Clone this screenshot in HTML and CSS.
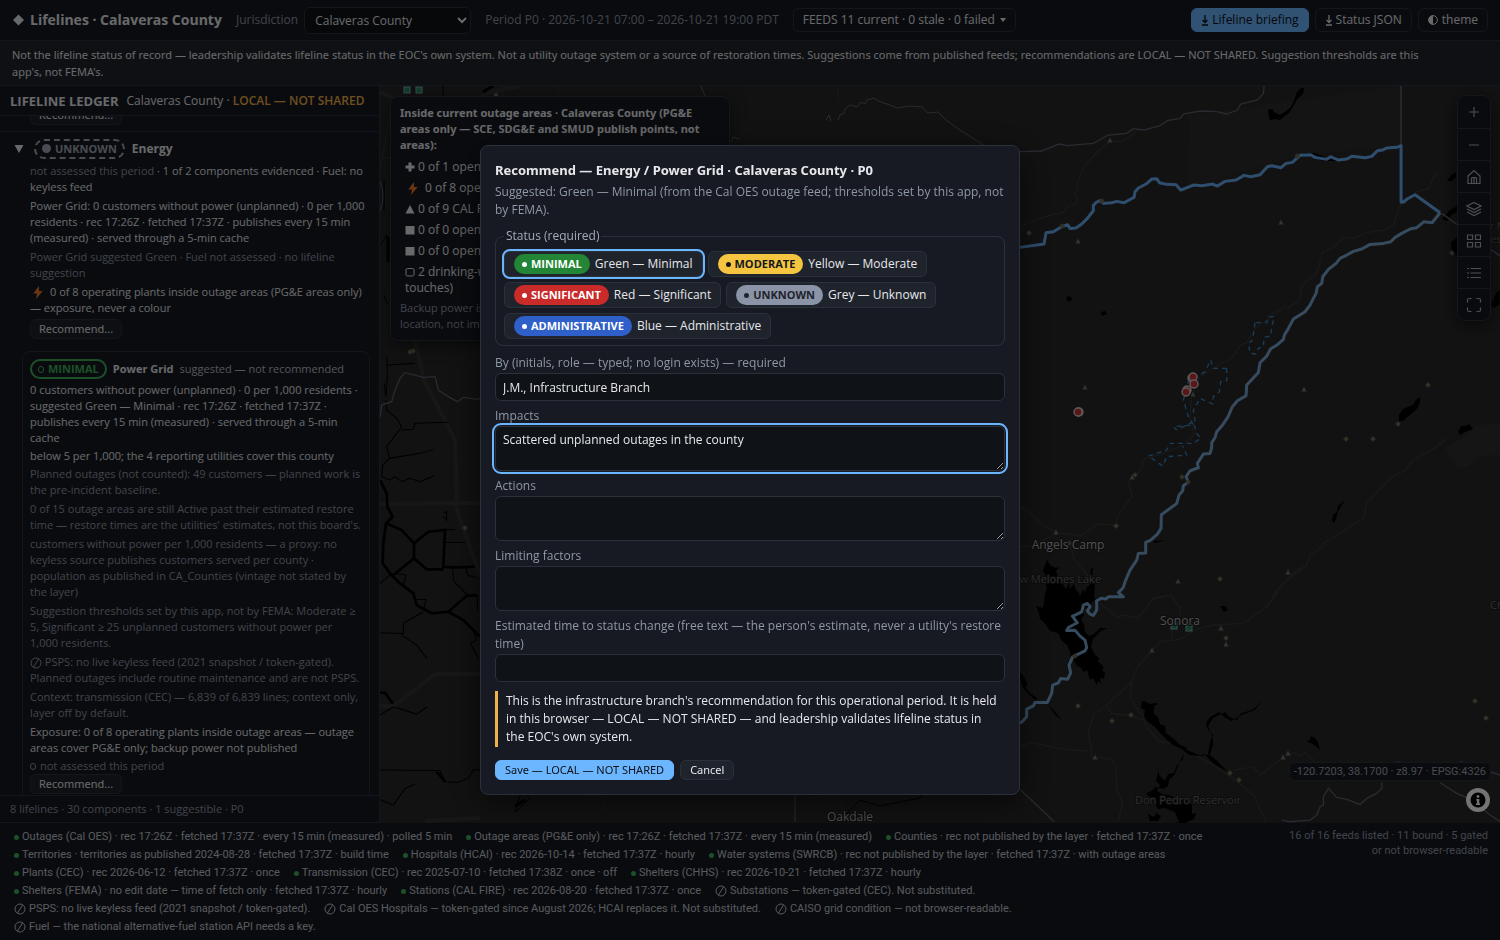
FILE: index.html
```html
<!DOCTYPE html>
<html lang="en">
<head>
<meta charset="utf-8">
<title>Lifelines · Calaveras County</title>
<link rel="stylesheet" href="styles.css">
</head>
<body>
<svg class="defs" aria-hidden="true">
  <symbol id="i-bolt" viewBox="0 0 12 14"><path d="M7 0 1 8h4l-1 6 7-8.500H7z" fill="#f0782e"/></symbol>
  <symbol id="i-none" viewBox="0 0 12 12"><circle cx="6" cy="6" r="5" fill="none" stroke="currentColor"/><path d="M3.500 10 8.500 2" stroke="currentColor"/></symbol>
  <symbol id="i-down" viewBox="0 0 8 12"><path d="M4 1v7M1.500 6 4 8.500 6.500 6M1 11h6" fill="none" stroke="currentColor" stroke-width="1.300"/></symbol>
  <symbol id="tri" viewBox="0 0 6 6" overflow="visible"><path d="M3 .5 5.500 5.500H.5z" fill="#777" stroke="#444" stroke-width=".6"/></symbol>
  <symbol id="dia" viewBox="0 0 6 6" overflow="visible"><path d="M3 .5 5.500 3 3 5.500 .5 3z" fill="#7b7355" stroke="#555" stroke-width=".8"/></symbol>
</svg>
<div class="app">
  <header class="topbar">
    <h1 class="brand"><svg class="gem" viewBox="0 0 12 12"><path d="M6 0.500 11.500 6 6 11.500 .5 6z" fill="currentColor"/></svg>Lifelines · Calaveras County</h1>
    <label class="juris" for="juris">Jurisdiction</label>
    <select id="juris" class="select"><option>Calaveras County</option></select>
    <span class="period">Period P0 · 2026-10-21 07:00 – 2026-10-21 19:00 PDT</span>
    <button class="btn top" type="button">FEEDS 11 current · 0 stale · 0 failed <svg class="caret" viewBox="0 0 6 4"><path d="M0 0h6L3 4z" fill="currentColor"/></svg></button>
    <span class="grow"></span>
    <button class="btn top primary" type="button"><svg class="down" viewBox="0 0 8 12"><use href="#i-down"/></svg>Lifeline briefing</button>
    <button class="btn top" type="button"><svg class="down" viewBox="0 0 8 12"><use href="#i-down"/></svg>Status JSON</button>
    <button class="btn top" type="button"><svg class="half" viewBox="0 0 10 10"><circle cx="5" cy="5" r="4.400" fill="none" stroke="currentColor"/><path d="M5 .5a4.500 4.500 0 0 0 0 9z" fill="currentColor"/></svg>theme</button>
  </header>
  <p class="banner">Not the lifeline status of record — leadership validates lifeline status in the EOC's own system. Not a utility outage system or a source of restoration times. Suggestions come from published feeds; recommendations are LOCAL — NOT SHARED. Suggestion thresholds are this app's, not FEMA's.</p>

  <div class="body">
    <aside class="ledger">
      <header class="ledger-head"><h2>LIFELINE LEDGER</h2><span>Calaveras County · <b>LOCAL — NOT SHARED</b></span></header>
      <div class="scroll">
        <section class="prev"><button class="btn small" type="button">Recommend...</button></section>
        <section class="item">
          <div class="item-head"><svg class="arrow" viewBox="0 0 10 8"><path d="M.5 0h9L5 8z" fill="currentColor"/></svg><span class="tag unknown"><i class="dot"></i>UNKNOWN</span><h3>Energy</h3></div>
          <div class="item-body">
            <p><span class="mute">not assessed this period</span> · 1 of 2 components evidenced · Fuel: no keyless feed</p>
            <p>Power Grid: 0 customers without power (unplanned) · 0 per 1,000 residents · rec 17:26Z · fetched 17:37Z · publishes every 15 min (measured) · served through a 5-min cache</p>
            <p class="mute">Power Grid suggested Green · Fuel not assessed · no lifeline suggestion</p>
            <p><svg class="bolt" viewBox="0 0 12 14"><use href="#i-bolt"/></svg>0 of 8 operating plants inside outage areas (PG&amp;E areas only) — exposure, never a colour</p>
            <button class="btn small" type="button">Recommend...</button>
          </div>
          <div class="card">
            <div class="card-head"><span class="tag minimal"><i class="ring"></i>MINIMAL</span><h4>Power Grid</h4><span class="soft">suggested — not recommended</span></div>
            <p>0 customers without power (unplanned) · 0 per 1,000 residents · suggested Green — Minimal · rec 17:26Z · fetched 17:37Z · publishes every 15 min (measured) · served through a 5-min cache</p>
            <p>below 5 per 1,000; the 4 reporting utilities cover this county</p>
            <p class="mute">Planned outages (not counted): 49 customers — planned work is the pre-incident baseline.</p>
            <p class="mute">0 of 15 outage areas are still Active past their estimated restore time — restore times are the utilities' estimates, not this board's.</p>
            <p class="mute">customers without power per 1,000 residents — a proxy: no keyless source publishes customers served per county · population as published in CA_Counties (vintage not stated by the layer)</p>
            <p class="mute">Suggestion thresholds set by this app, not by FEMA: Moderate ≥ 5, Significant ≥ 25 unplanned customers without power per 1,000 residents.</p>
            <p class="mute"><svg class="none" viewBox="0 0 12 12"><use href="#i-none"/></svg> PSPS: no live keyless feed (2021 snapshot / token-gated). Planned outages include routine maintenance and are not PSPS.</p>
            <p class="mute">Context: transmission (CEC) — 6,839 of 6,839 lines; context only, layer off by default.</p>
            <p>Exposure: 0 of 8 operating plants inside outage areas — outage areas cover PG&amp;E only; backup power not published</p>
            <p class="mute"><i class="ring"></i>not assessed this period</p>
            <button class="btn small" type="button">Recommend...</button>
          </div>
        </section>
      </div>
      <footer class="ledger-foot">8 lifelines · 30 components · 1 suggestible · P0</footer>
    </aside>

    <main class="map">
      <svg class="canvas" viewBox="380 86 1120 737" preserveAspectRatio="xMinYMin slice" role="img" aria-label="County map">
        <rect x="380" y="86" width="1120" height="737" fill="#282828"/>
        <path d="M1189 86h311v734h-190v-500l-122-135z" fill="#2b2b2b" opacity=".35"/>
        <path d="M1189 115 1401 86V146L1300 155 1188 188z" fill="#303030" opacity=".6"/>
        <path d="M1445 448 1460 440 1478 425 1500 424V455L1480 456 1468 466 1458 468z" fill="#303030"/>
        <g class="road">
          <g transform="translate(1000 0) scale(.3334)">
            <path d="M60 685 85 668 150 645 190 636 200 622 228 612 232 595 224 578 232 572 234 540 255 495 300 448 330 424 365 424 400 402 412 390"/>
            <path d="M860 925 900 900 905 855 950 820 968 758 1010 735 1028 712 1060 714 1100 698 1160 688 1182 672 1197 622 1250 576 1285 565 1310 515"/>
            <path d="M800 950 825 935 860 915"/>
          </g>
          <g transform="translate(1000 310) scale(.3334)">
            <path d="M845 0 770 50 740 98 722 104 695 145 650 168 600 200 575 260 570 320 582 375 545 408 490 430 430 448 425 475 385 515 397 558 355 615 348 645 295 642 240 677 170 668 125 645 90 605 60 590M170 668 100 708 60 710M212 700 220 745 262 795 265 830 300 900"/>
            <path d="M1340 385 1310 410 1240 450 1215 480 1170 505 1100 580 1090 625 1050 650 970 700 965 713 930 735 920 765 880 790 830 840 800 895"/>
            <path d="M437 897 460 862 515 856 538 890 540 900"/>
          </g>
          <g transform="translate(1000 560) scale(.3334)">
            <path d="M925 0 915 20 850 70 800 140 730 190 640 195 590 207 540 238 480 245 445 285 412 320 395 365 320 435 280 465 265 520 275 570 275 590 335 598 348 620 350 690 367 725 355 785M395 365 390 415 425 465 440 500 475 543 520 550 570 577 640 615 700 655 765 710 780 750 800 785M320 435 335 460 380 465 430 480M60 558 95 548 160 562 200 568 250 573 275 568M300 130 350 172 375 165 415 175 458 118 512 105 540 140V165M515 200V238M700 630 760 620 780 645 850 592 880 578 900 588 915 578 945 605"/>
          </g>
          <path class="wide" d="M380 504 455 503 460 519 480 575M415 341 424 380 455 440 457 503 480 503M380 706 394 706 435 674H480M425 821 480 818"/>
          <path d="M503 86V96M554 86 563 96M838 86V100M380 158H391M391 110 381 165M395 100 410 86M500 798 535 792 600 796 605 810M810 798 835 795 850 820"/>
          <path class="wide" d="M465 108 490 92 520 86M380 92l20 8"/>
        </g>
        <g class="water">
          <path d="M1268 110l4-1 2 3 6 3 5-3 6-5 3-6 3-9 4-4 3 0-1 6-6 5-3 6-5 8-8 6-2 1-3-1-6 1-1-3z"/>
          <path d="M1303 153l12 0 12 5 8-2 4 5-15 0z"/>
          <path d="M1447 181l4-6 5-3v5l-4 4zM1442 219l7-8 3-2 5-3v6l-5 2-3 5-2 2zM1451 243l6-6v18l-5-3zM1491 305l5-12 4-3v14l-6 4zM1066 298l2-2 3 1 1 3-4 2zM1101 312l4-1 2 3-5 2z"/>
          <path d="M1399 421l0-6 4-6 10-4 3-5 4-3v5l-3 7-6 5-8 7zM1458 432l3-6 5 0 3-2 4 5-8 3-5 3zM1332 521l1-6 4-3 1-6 7-6-5 8-2 4-2 7-2 4zM1152 541l12-1-8 3zM1136 555l3-3 4 1-5 5z"/>
          <path d="M1047 560l4 6 5 2 4-1-4 4 2 6 4 6 4 6 3-6 1 6 4-5 2 6 3 3 1 4 3-8 2 4 2-6 3-3 0-6 1-9 2-2-1 13 3 5-1 12 2 2-5 4-4 5-4-2 1 9-3 4 3 6 1 7 4 4 5-2 6-6 8 0-7 3-8 8-2 8 4 8 4 3-1 4 3 2 3 4-2 2 3 3-1 6-4-1 1 5-3-2-1 4-4-7-3 2-3-10-3 2-4-5-3-1-4-7-2 1-1-8-3-7-5-4-4-8-8-2-6-9-4-3-1-6-3-7 7 2 1-6 1-8 2-7-2-4 4-2-6-10z"/>
          <path d="M1020 672l4 5 3 6-1 5 4 5 8 6-3 1-12-12-3-9z"/>
          <path d="M1048 704l14 16-7-5z"/>
          <path d="M1144 701l6 3 5-1 3 1-4 2 0 8 4 3 2 7 5 2 1 7 8 6 6 6 6 2 1 3 14 6 9-2 3-9 0-7-5-12 5-8 12-6 4 5 8 3 3-6 14-5 7-8-6 9-14 5-10 6-8-5-4-4-9 5-4 6 1 5 6 7-3 8-2 10 9 8 11 11-14-8-10-10-4 2-11-1-7-6-9-4-9-8-9-10-8-6-3-6 1-5-4-2 1-7z"/>
          <path d="M1184 754l-1 5-6 6-3 8-6 1-3 7-6-6-2-12 1 9-2 9 4 4-3 6 5 3 10 2 6 5 1-4 8 3 5 5 0 9 4-1-2 6-7 3-3 7-3-4-5 6-7-1 2-6 8-2-4-10-10-4-7 1-6-10-6-5 7-4 2-3 8 2 5-3 1-6 6-6 4-11zM1148 814l6 3 2-4 5 3-3 5h-8zM1306 741l4-1 1-4 4 2 3 4 2 8-7-6zM1220 606l5 0 3 4-4 2z"/>
        </g>
        <g class="river" transform="translate(380 330) scale(.3334)">
          <path class="mid" d="M20 80 22 140 18 200 12 160M22 105 105 100M18 210 20 240 50 265 65 290 20 350 28 385 120 370 160 358M65 300 100 298 105 280 205 277M28 385 8 405 5 440 30 450 45 440 65 455 90 445 120 455 162 437"/>
          <path class="thick" d="M0 450 20 490 22 530 38 560 18 580 10 640 8 700 30 730 60 760 100 790 110 825 155 850 205 845 260 797 290 795"/>
          <path class="thick" d="M20 580 65 600 102 640 102 685 40 735M102 640 145 605 195 600 190 710 220 712 285 710M102 685 140 718 190 718M205 845 250 870 300 920"/>
          <path class="mid" d="M195 600 225 598M195 637 258 637M218 718 222 755 265 797 292 797 292 840M258 715 262 735 295 745M0 760 30 735 70 765 78 735 45 730M110 808 138 808 130 840M130 845 70 880V910L0 908M65 915 110 945 140 985M275 890 290 930 272 940 295 985M0 1155 40 1130 110 1152 142 1130M0 1320 180 1321 195 1355 230 1357 265 1345 280 1318 300 1320M0 1408 40 1425 75 1375 105 1362M190 548 200 545 200 570 190 558"/>
          <path class="thick" d="M0 1088 15 1088 38 1120M170 1325 195 1355"/>
        </g>
        <g class="river"><path class="mid" d="M443 86v10M384 180v30M380 245l7-10 3 18M384 295l4 10M520 795 515 812 530 798M840 820 860 800 880 806 920 798 922 795"/><path class="thick" d="M483 92l10-6M388 262v-25M515 806l10-6"/></g>
        <g class="edge">
          <g transform="translate(1000 0) scale(.3334)"><path d="M60 455 125 453 177 432 200 437 280 430 325 405 380 400 400 386 432 390 480 377 502 362 540 355 550 342 600 333 650 335 680 342 712 330 722 312 772 300 790 280 792 258"/><path class="heavy" d="M1203 258V437M1325 640 1372 674M1472 748 1500 768"/></g>
          <g transform="translate(380 330) scale(.3334)"><path d="M0 262 5 225 35 215 45 180 60 145 75 128 130 142 165 140 175 180 205 200 232 215 250 202 290 208 300 205"/></g>
          <path d="M826 120 829 115 831 121M838 120 840 115 844 113 845 109 850 105 857 107 861 102 865 104 867 100 874 98 878 101 890 105 897 108 910 106 922 107 928 113 938 112 946 120 960 130 985 146M701 86l4 10M731 142l2-5 6 2M380 181q6 15 0 30M795 795v27"/>
          <g transform="translate(1000 560) scale(.3334)"><path d="M60 688 163 785M845 780 870 785 930 780 950 765 960 740 970 735 970 710 985 685 1010 712 1040 718 1080 733 1100 715 1130 700 1145 685V668M1190 605 1250 620M1320 668 1370 700 1410 717 1470 765 1500 785M1380 605 1500 645"/></g>
        </g>
        <g class="county">
          <g transform="translate(1000 0) scale(.3334)"><path d="M60 742 132 732 138 698 160 695 185 680 203 674 210 685 228 684 245 672 262 655 280 632 280 616 290 606 300 602 310 610 335 608 350 604 372 608 402 592 405 575 415 564 438 552 455 537 470 536 478 548 500 553 528 554 542 570 580 555 605 557 638 552 652 558 675 544 708 540 732 526 752 530 780 524 802 500 815 497 843 503 858 490 877 487 900 466 932 464 945 472 980 478 992 470 1015 480 1040 477 1055 469 1095 473 1115 469 1132 452 1150 449 1160 444 1190 442 1203 437 1203 607 1212 605 1222 596 1245 584 1320 638"/></g>
          <g class="dull" transform="translate(1000 0) scale(.3334)"><path d="M1320 638 1296 668 1272 665 1250 683 1232 686 1205 700 1185 712 1172 725 1150 730 1110 733 1085 747 1060 754 1040 765 1020 775 1008 790 985 808 968 830 965 850 952 860 948 880 940 895 930 915 915 935 880 957 865 985 853 1005 850 1018 832 1034 812 1046 800 1068 780 1088 775 1117 740 1155 738 1187 712 1202 697 1220 683 1252 665 1278 650 1295 645 1312 635 1328 635 1342 630 1360 610 1362 592 1390 595 1403 570 1412 558 1430 565 1446 550 1457 548 1472 537 1485 530 1510 484 1544 483 1585 472 1602 452 1620 437 1627 437 1659 415 1660 410 1680 390 1710 375 1745 370 1762 355 1777 370 1790 325 1790 317 1797 305 1794 290 1802 290 1830 280 1846 270 1842 262 1832 270 1820 262 1810 250 1815 245 1835 225 1845 217 1848 232 1868 205 1882 200 1891 225 1890 240 1908 255 1920 260 1942 255 1952 218 1970 207 1995 212 2018 203 2037 182 2035 175 2048 158 2055 155 2080 142 2107 105 2107 100 2117 80 2127 80 2150 68 2163 60 2170"/></g>
        </g>
        <g class="outage" transform="translate(1000 310) scale(.3334)">
          <path d="M765 38 758 90 745 100 750 130 768 132 775 115 790 110 792 82 812 78 815 55 822 20 805 20 800 38z"/>
          <path d="M680 175 640 175 632 150 615 185 565 215 550 270 565 320 580 345 520 350 530 360 580 335 590 370 602 385 580 400 510 400 500 420 445 438 470 455 488 468 500 440 560 435 548 408M680 175 680 212 662 215 658 245 640 260 638 282 600 265 580 300 585 335"/>
        </g>
        <g>
          <use href="#tri" x="1107" y="137" width="6" height="6"/><use href="#tri" x="1075" y="238" width="6" height="6"/><use href="#tri" x="1278" y="219" width="6" height="6"/><use href="#tri" x="1082" y="384" width="6" height="6"/><use href="#tri" x="1190" y="391" width="6" height="6"/><use href="#tri" x="1301" y="386" width="6" height="6"/><use href="#tri" x="1129" y="474" width="6" height="6"/><use href="#tri" x="1053" y="529" width="6" height="6"/><use href="#tri" x="1175" y="578" width="6" height="6"/><use href="#tri" x="1285" y="569" width="6" height="6"/><use href="#tri" x="1218" y="625" width="6" height="6"/><use href="#tri" x="1223" y="641" width="6" height="6"/><use href="#tri" x="1149" y="647" width="6" height="6"/><use href="#tri" x="1092" y="754" width="6" height="6"/><use href="#tri" x="1280" y="754" width="6" height="6"/><use href="#tri" x="1285" y="750" width="6" height="6"/>
          <use href="#dia" x="1026" y="230" width="6" height="6"/><use href="#dia" x="1059" y="223" width="6" height="6"/><use href="#dia" x="1099" y="198" width="6" height="6"/><use href="#dia" x="1294" y="153" width="6" height="6"/><use href="#dia" x="1449" y="250" width="6" height="6"/><use href="#dia" x="1425" y="382" width="6" height="6"/><use href="#dia" x="1395" y="421" width="6" height="6"/><use href="#dia" x="1343" y="436" width="6" height="6"/><use href="#dia" x="1370" y="436" width="6" height="6"/><use href="#dia" x="1132" y="472" width="6" height="6"/><use href="#dia" x="1179" y="474" width="6" height="6"/><use href="#dia" x="1185" y="479" width="6" height="6"/><use href="#dia" x="1113" y="523" width="6" height="6"/><use href="#dia" x="1066" y="540" width="6" height="6"/><use href="#dia" x="1217" y="576" width="6" height="6"/><use href="#dia" x="1223" y="635" width="6" height="6"/><use href="#dia" x="1072" y="653" width="6" height="6"/><use href="#dia" x="1075" y="703" width="6" height="6"/><use href="#dia" x="1109" y="718" width="6" height="6"/><use href="#dia" x="1128" y="712" width="6" height="6"/><use href="#dia" x="1227" y="770" width="6" height="6"/><use href="#dia" x="1236" y="777" width="6" height="6"/><use href="#dia" x="1472" y="698" width="6" height="6"/><use href="#dia" x="1483" y="715" width="6" height="6"/><use href="#dia" x="407" y="349" width="6" height="6"/><use href="#dia" x="410" y="348" width="6" height="6"/><use href="#dia" x="462" y="525" width="6" height="6"/><use href="#dia" x="493" y="92" width="6" height="6"/>
        </g>
        <g class="fires"><circle cx="1079" cy="412" r="4"/><circle cx="1078" cy="412" r="4"/><circle cx="1192" cy="378" r="4"/><circle cx="1193" cy="377" r="4"/><circle cx="1194" cy="384" r="4"/><circle cx="1187" cy="390" r="4"/><circle cx="1186" cy="392" r="4"/></g>
        <g class="hosp"><rect x="404" y="87" width="6" height="6"/><rect x="416" y="87" width="6" height="6"/><rect x="1171" y="623" width="6" height="6"/><rect x="1186" y="625" width="6" height="6"/></g>
        <g class="names">
          <text x="1068" y="549">Angels Camp</text><text x="1180" y="625">Sonora</text><text x="850" y="821">Oakdale</text>
          <text class="lake" x="1053" y="583">New Melones Lake</text><text class="lake" x="1188" y="804">Don Pedro Reservoir</text><text class="lake" x="1500" y="609">Che</text><text class="lake" x="1498" y="230">r M</text><text class="lake" x="1499" y="243">ese</text>
        </g>
      </svg>
      <section class="inside">
        <h3>Inside current outage areas · Calaveras County (PG&amp;E areas only — SCE, SDG&amp;E and SMUD publish points, not areas):</h3>
        <ul>
          <li><svg class="mk" viewBox="0 0 10 10"><path d="M3.500 .5h3v3h3v3h-3v3h-3v-3h-3v-3h3z" fill="currentColor"/></svg>0 of 1 open hospitals</li>
          <li><svg class="bolt" viewBox="0 0 12 14"><use href="#i-bolt"/></svg>0 of 8 operating plants</li>
          <li><svg class="mk" viewBox="0 0 10 10"><path d="M5 1 9.500 9.500H.5z" fill="currentColor"/></svg>0 of 9 CAL FIRE stations</li>
          <li><svg class="mk" viewBox="0 0 10 10"><path d="M.5 1h9v8.500h-9z" fill="currentColor"/></svg>0 of 0 open shelters (CHHS)</li>
          <li><svg class="mk" viewBox="0 0 10 10"><path d="M.5 1h9v8.500h-9z" fill="currentColor"/></svg>0 of 0 open shelters (FEMA)</li>
          <li><svg class="mk" viewBox="0 0 10 10"><rect x="1" y="1.500" width="8" height="7.500" rx="1.500" fill="none" stroke="currentColor"/></svg>2 drinking-water systems in outage areas (boundary touches)</li>
        </ul>
        <p>Backup power is not published. A site inside an area shares location, not impact.</p>
      </section>
      <nav class="tools" aria-label="Map tools">
        <button type="button" aria-label="Zoom in"><svg viewBox="0 0 16 16"><path d="M8 3v10M3 8h10"/></svg></button>
        <button type="button" aria-label="Zoom out"><svg viewBox="0 0 16 16"><path d="M3 8h10"/></svg></button>
        <button type="button" aria-label="Home"><svg viewBox="0 0 16 16"><path d="M2 7 8 1.500 14 7v7.500H2zM5.500 14V9.500a1.500 1.500 0 0 1 1.500-1h2a1.500 1.500 0 0 1 1.500 1V14M8 9v5"/></svg></button>
        <button type="button" aria-label="Layers"><svg viewBox="0 0 16 16"><path d="M8 1.500 15 5 8 8.500 1 5zM1 8l7 3.500L15 8M1 11l7 3.500 7-3.500"/></svg></button>
        <button type="button" aria-label="Basemaps"><svg viewBox="0 0 16 16"><path d="M1.500 2h5v4.500h-5zM9.500 2h5v4.500h-5zM1.500 9.500h5V14h-5zM9.500 9.500h5V14h-5z"/></svg></button>
        <button type="button" aria-label="Legend"><svg viewBox="0 0 16 16"><path d="M4.500 3.500H15M4.500 8H15M4.500 12.500H15M1 3.500h2M1 8h2M1 12.500h2"/></svg></button>
        <button type="button" aria-label="Full screen"><svg viewBox="0 0 16 16"><path d="M1.500 5.500V3A1.500 1.500 0 0 1 3 1.500h2.500M10.500 1.500H13A1.500 1.500 0 0 1 14.500 3v2.500M14.500 10.500V13a1.500 1.500 0 0 1-1.500 1.500h-2.500M5.500 14.500H3A1.500 1.500 0 0 1 1.500 13v-2.500"/></svg></button>
      </nav>
      <div class="corner">
        <span class="coords">-120.7203, 38.1700 · z8.97 · EPSG:4326</span>
        <button class="info" type="button" aria-label="Attribution"><svg viewBox="0 0 24 24"><circle cx="12" cy="12" r="12" fill="#fff"/><circle cx="12" cy="12" r="7.500" fill="#000"/><circle cx="12" cy="8.500" r="1.400" fill="#fff"/><path d="M10.300 11h3v4.500h.7V17h-4v-1.500h.9v-3h-.6z" fill="#fff"/></svg></button>
      </div>
    </main>
  </div>

  <footer class="feeds">
    <ul>
      <li><i></i>Outages (Cal OES) · rec 17:26Z · fetched 17:37Z · every 15 min (measured) · polled 5 min</li>
      <li><i></i>Outage areas (PG&amp;E only) · rec 17:26Z · fetched 17:37Z · every 15 min (measured)</li>
      <li><i></i>Counties · rec not published by the layer · fetched 17:37Z · once</li>
      <li><i></i>Territories · territories as published 2024-08-28 · fetched 17:37Z · build time</li>
      <li><i></i>Hospitals (HCAI) · rec 2026-10-14 · fetched 17:37Z · hourly</li>
      <li><i></i>Water systems (SWRCB) · rec not published by the layer · fetched 17:37Z · with outage areas</li>
      <li><i></i>Plants (CEC) · rec 2026-06-12 · fetched 17:37Z · once</li>
      <li><i></i>Transmission (CEC) · rec 2025-07-10 · fetched 17:38Z · once · off</li>
      <li><i></i>Shelters (CHHS) · rec 2026-10-21 · fetched 17:37Z · hourly</li>
      <li><i></i>Shelters (FEMA) · no edit date — time of fetch only · fetched 17:37Z · hourly</li>
      <li><i></i>Stations (CAL FIRE) · rec 2026-08-20 · fetched 17:37Z · once</li>
      <li><svg class="none" viewBox="0 0 12 12"><use href="#i-none"/></svg>Substations — token-gated (CEC). Not substituted.</li>
      <li><svg class="none" viewBox="0 0 12 12"><use href="#i-none"/></svg>PSPS: no live keyless feed (2021 snapshot / token-gated).</li>
      <li><svg class="none" viewBox="0 0 12 12"><use href="#i-none"/></svg>Cal OES Hospitals — token-gated since August 2026; HCAI replaces it. Not substituted.</li>
      <li><svg class="none" viewBox="0 0 12 12"><use href="#i-none"/></svg>CAISO grid condition — not browser-readable.</li>
      <li><svg class="none" viewBox="0 0 12 12"><use href="#i-none"/></svg>Fuel — the national alternative-fuel station API needs a key.</li>
    </ul>
    <p>16 of 16 feeds listed · 11 bound · 5 gated or not browser-readable</p>
  </footer>
</div>

<div class="backdrop">
  <form class="dialog" role="dialog" aria-labelledby="dlg-title">
    <h2 id="dlg-title">Recommend — Energy / Power Grid · Calaveras County · P0</h2>
    <p class="lead">Suggested: Green — Minimal (from the Cal OES outage feed; thresholds set by this app, not by FEMA).</p>
    <fieldset>
      <legend>Status (required)</legend>
      <div class="chips">
        <label class="chip"><input type="radio" name="status" checked><span class="pill green">MINIMAL</span>Green — Minimal</label>
        <label class="chip"><input type="radio" name="status"><span class="pill yellow">MODERATE</span>Yellow — Moderate</label>
        <label class="chip"><input type="radio" name="status"><span class="pill red">SIGNIFICANT</span>Red — Significant</label>
        <label class="chip"><input type="radio" name="status"><span class="pill grey">UNKNOWN</span>Grey — Unknown</label>
        <label class="chip"><input type="radio" name="status"><span class="pill blue">ADMINISTRATIVE</span>Blue — Administrative</label>
      </div>
    </fieldset>
    <div class="field first"><label for="by">By (initials, role — typed; no login exists) — required</label><input id="by" type="text" value="J.M., Infrastructure Branch"></div>
    <div class="field"><label for="impacts">Impacts</label><textarea id="impacts">Scattered unplanned outages in the county</textarea></div>
    <div class="field"><label for="actions">Actions</label><textarea id="actions"></textarea></div>
    <div class="field"><label for="limits">Limiting factors</label><textarea id="limits"></textarea></div>
    <div class="field"><label for="eta">Estimated time to status change (free text — the person's estimate, never a utility's restore time)</label><input id="eta" type="text"></div>
    <p class="note">This is the infrastructure branch's recommendation for this operational period. It is held in this browser — LOCAL — NOT SHARED — and leadership validates lifeline status in the EOC's own system.</p>
    <div class="actions"><button class="btn small primary" type="button">Save — LOCAL — NOT SHARED</button><button class="btn small" type="button">Cancel</button></div>
  </form>
</div>
<script src="app.js"></script>
</body>
</html>
```
FILE: app.js
```js
const impacts = document.getElementById('impacts');
impacts.focus();
impacts.setSelectionRange(impacts.value.length, impacts.value.length);
```
FILE: styles.css
```css
:root {
  color-scheme: dark;
  --bg: #0f1216;
  --surface: #171a22;
  --raised: #1f232b;
  --line: #2b313b;
  --text: #e6e8ec;
  --mute: #8f98a6;
  --accent: #6cb6ff;
  --amber: #f0b04a;
}
* { box-sizing: border-box; }
body {
  margin: 0;
  background: var(--bg);
  color: var(--text);
  font: 12px/18px "Open Sans", "Noto Sans", sans-serif;
}
h1, h2, h3, h4, p, ul { margin: 0; padding: 0; }
ul { list-style: none; }
button, input, select, textarea { font: inherit; color: inherit; }
.defs { position: absolute; width: 0; height: 0; }
.app { display: flex; flex-direction: column; height: 100vh; }
.grow { flex: 1; }
.btn {
  display: inline-flex;
  align-items: center;
  background: var(--raised);
  border: 1px solid var(--line);
  border-radius: 6px;
  white-space: nowrap;
}
.btn.top { height: 24px; padding: 0 9px; }
.btn.small { height: 20px; padding: 0 8px; font: 11px/18px "Noto Sans", sans-serif; }
.btn.primary { background: var(--accent); border-color: var(--accent); color: #0b1017; }
.topbar .btn:not(.primary) { background: var(--surface); }

.topbar {
  display: flex;
  align-items: center;
  gap: 6px;
  height: 41px;
  padding: 0 12px;
  background: var(--surface);
  border-bottom: 1px solid var(--line);
  white-space: nowrap;
}
.brand { display: flex; align-items: center; gap: 5px; font-size: 14px; line-height: 20px; margin-right: 8px; }
.gem { width: 13px; height: 12px; }
.juris, .period { color: var(--mute); }
.select {
  width: 167px;
  height: 27px;
  padding: 0 6px;
  background: var(--bg);
  border: 1px solid var(--line);
  border-radius: 6px;
}
.period { margin: 0 8px; }
.caret { width: 6px; height: 4px; margin-left: 5px; }
.down { width: 8px; height: 12px; margin-right: 3px; }
.half { width: 10px; height: 10px; margin-right: 4px; }
.banner {
  padding: 5px 60px 5px 12px;
  background: #20242b;
  border-bottom: 1px solid var(--line);
  font: 11px/17px "Noto Sans", sans-serif;
}

.body { flex: 1; display: flex; min-height: 0; }
.ledger {
  flex: 0 0 380px;
  display: flex;
  flex-direction: column;
  background: var(--surface);
  border-right: 1px solid var(--line);
  font-size: 11px;
  line-height: 16px;
}
.ledger-head {
  display: flex;
  align-items: center;
  gap: 8px;
  height: 30px;
  padding: 0 10px;
  border-bottom: 1px solid var(--line);
  font-size: 12px;
  white-space: nowrap;
}
.ledger-head h2 { font-size: 13px; line-height: 18px; }
.ledger-head b { color: var(--amber); font-weight: 600; }
.scroll { flex: 1; min-height: 0; overflow: hidden; }
.prev { margin-top: -11px; padding: 0 30px 6px; display: flex; border-bottom: 1px solid var(--line); }
.item-head { display: flex; align-items: center; gap: 7px; padding: 6px 14px 4px; height: 31px; }
.item-head h3 { font-size: 12px; line-height: 18px; }
.card h4 { font-size: 11px; line-height: 18px; }
.arrow { width: 10px; height: 8px; margin-right: 3px; }
.tag { display: inline-flex; align-items: center; gap: 4px; height: 20px; padding: 0 6px; border: 2px solid; border-radius: 10px; font-weight: 700; }
.tag.unknown { border-style: dashed; color: #a3a9b5; }
.tag.minimal { color: #3fb35a; }
.dot { width: 9px; height: 9px; border-radius: 50%; background: currentColor; }
.ring { display: inline-block; width: 6px; height: 7px; border: 1px solid; border-radius: 3px; }
.mute .ring { margin-right: 4px; }
.item-body { padding: 0 8px 0 30px; }
.item-body p { margin-bottom: 3px; }
.card p { margin-bottom: 2px; }
.card p.mute { margin-bottom: 3px; }
.card p:last-of-type { margin-bottom: 0; }
.mute { color: var(--mute); }
.soft { color: #b9bec8; }
.bolt { width: 12px; height: 13px; margin: 0 6px 0 2px; vertical-align: -3px; }
.none { width: 12px; height: 12px; vertical-align: -3px; }
.card { margin: 12px 9px 0 22px; padding: 7px; border: 1px solid var(--line); border-radius: 8px; }
.card-head { display: flex; align-items: center; gap: 6px; margin-bottom: 3px; }
.ledger-foot { height: 28px; padding: 5px 10px; border-top: 1px solid var(--line); border-bottom: 1px solid var(--line); color: var(--mute); }

.map { position: relative; flex: 1; min-width: 0; overflow: hidden; background: #282828; }
.canvas { position: absolute; inset: 0; width: 100%; height: 100%; fill: none; }
.road { stroke: #383838; stroke-width: 4; }
.road > path { stroke-width: 1; }
.road > .wide { stroke-width: 4; stroke: #343434; }
.water { fill: #000; }
.river { stroke: #000; stroke-width: 3; }
.river .thick { stroke-width: 8; }
g.river:not([transform]) { stroke-width: 1; }
g.river:not([transform]) .thick { stroke-width: 3; }
.edge { stroke: #5b5f6b; stroke-width: 1; }
.edge g { stroke-width: 4; }
.edge .heavy { stroke-width: 5; }
.county { stroke: #6cb6ff; stroke-width: 9; stroke-linejoin: round; opacity: .95; }
.county .dull { stroke: #7faedd; }
.outage { stroke: #3a86c0; stroke-width: 4; stroke-dasharray: 14 12; }
.fires circle { fill: #d22f36; stroke: #c8c8c8; stroke-width: 1.500; }
.hosp rect { fill: #22866a; stroke: #8aa; stroke-width: 1; }
.names { font: 12px "Open Sans", sans-serif; fill: #b4b4b4; text-anchor: middle; stroke: #1c1c1c; stroke-width: 2; paint-order: stroke; }
.names .lake { font-size: 11px; fill: #6a6a6a; }

.inside {
  position: absolute;
  left: 10px;
  top: 10px;
  width: 340px;
  padding: 8px 9px;
  background: var(--surface);
  border: 1px solid var(--line);
  border-radius: 8px;
  box-shadow: 0 4px 16px #0008;
  font-size: 11px;
  line-height: 16px;
}
.inside h3 { font: bold 11px/16px "Noto Sans", sans-serif; margin-bottom: 6px; }
.inside ul { display: grid; gap: 5px; padding-left: 5px; font-size: 12px; }
.inside li { height: 16px; }
.inside li:last-child { height: auto; }
.inside p { color: var(--mute); margin-top: 4px; }
.mk { width: 10px; height: 10px; margin-right: 3px; vertical-align: -1px; }
.tools {
  position: absolute;
  right: 9px;
  top: 9px;
  display: flex;
  flex-direction: column;
  width: 34px;
  border: 1px solid var(--line);
  border-radius: 8px;
  overflow: hidden;
  background: var(--surface);
  box-shadow: 0 4px 16px #0008;
}
.tools button { display: grid; place-items: center; height: 32px; padding: 0; border: 0; background: none; }
.tools button + button { border-top: 1px solid var(--line); }
.tools svg { width: 16px; height: 16px; fill: none; stroke: #a9adb5; stroke-width: 1.200; }
.corner { position: absolute; right: 9px; bottom: 11px; display: grid; justify-items: end; gap: 7px; }
.coords { padding: 0 4px; background: var(--surface); border: 1px solid var(--line); border-radius: 6px; color: #a0a6b0; font: 11px/17px Roboto, sans-serif; }
.info { width: 24px; height: 24px; margin-right: 1px; padding: 0; border: 0; background: none; }
.info svg { display: block; }

.feeds {
  display: flex;
  align-items: flex-start;
  gap: 20px;
  padding: 5px 12px 4px;
  background: var(--surface);
  font: 11px/18px Roboto, sans-serif;
}
.feeds ul { flex: 1; display: flex; flex-wrap: wrap; column-gap: 12px; color: #c3c8d0; }
.feeds li { display: flex; align-items: center; gap: 3px; padding-left: 2px; white-space: nowrap; }
.feeds i { width: 5px; height: 5px; border-radius: 50%; background: #3fb35a; }
.feeds p { width: 208px; color: var(--mute); text-align: right; line-height: 15px; }

.backdrop {
  position: fixed;
  inset: 0;
  display: grid;
  place-items: center;
  background: #0000008c;
}
.dialog {
  width: 540px;
  padding: 14px;
  background: var(--surface);
  border: 1px solid var(--line);
  border-radius: 8px;
  box-shadow: 0 8px 32px #0009;
}
.dialog h2 { font: bold 13px/20px "Noto Sans", sans-serif; }
.lead { margin-top: 3px; color: var(--mute); }
fieldset { margin: 8px 0 0; padding: 6px 8px; border: 1px solid var(--line); border-radius: 8px; min-width: 0; }
legend { padding: 0 2px; color: #a3abb8; }
.chips { display: flex; flex-wrap: wrap; gap: 5px; }
.chip { position: relative; display: flex; align-items: center; gap: 5px; height: 26px; padding: 0 9px; background: var(--raised); border: 1px solid var(--line); border-radius: 6px; }
.chip:has(:checked) { outline: 2px solid var(--accent); }
.chip input { position: absolute; opacity: 0; margin: 0; }
.pill { display: inline-flex; align-items: center; gap: 4px; height: 20px; padding: 0 8px; border-radius: 10px; font-size: 11px; font-weight: 700; color: #fff; }
.pill::before { content: ""; width: 5px; height: 5px; border-radius: 50%; background: currentColor; }
.green { background: #238636; }
.yellow { background: #f5c542; color: #14181d; }
.red { background: #c92a2a; }
.grey { background: #8b93a7; color: #1f232b; }
.blue { background: #2f5fc9; }
.field { margin-top: 6px; display: grid; gap: 1px; }
.field.first { margin-top: 8px; }
.field label { color: var(--mute); }
.field input, .field textarea { width: 100%; padding: 4px 7px; background: var(--bg); border: 1px solid var(--line); border-radius: 6px; }
.field input { height: 28px; }
.field textarea { display: block; height: 45px; resize: vertical; }
.field :focus { outline: 2px solid var(--accent); outline-offset: 1px; }
.note { margin-top: 9px; padding: 1px 8px; border-left: 3px solid var(--amber); }
.actions { display: flex; gap: 6px; margin-top: 13px; }
.actions .btn { padding: 0 9px; }
```
